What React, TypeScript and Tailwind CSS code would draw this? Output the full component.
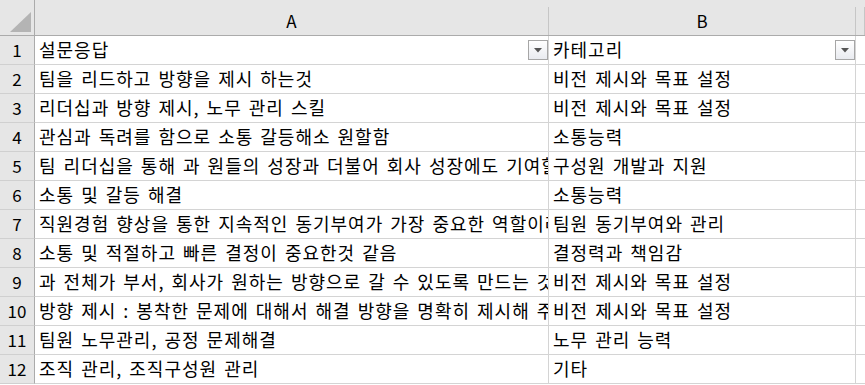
const rows: [string, string][] = [
  ['설문응답', '카테고리'],
  ['팀을 리드하고 방향을 제시 하는것', '비전 제시와 목표 설정'],
  ['리더십과 방향 제시, 노무 관리 스킬', '비전 제시와 목표 설정'],
  ['관심과 독려를 함으로 소통 갈등해소 원할함', '소통능력'],
  ['팀 리더십을 통해 과 원들의 성장과 더불어 회사 성장에도 기여할 수 있도록 하는 것', '구성원 개발과 지원'],
  ['소통 및 갈등 해결', '소통능력'],
  ['직원경험 향상을 통한 지속적인 동기부여가 가장 중요한 역할이라고 생각함', '팀원 동기부여와 관리'],
  ['소통 및 적절하고 빠른 결정이 중요한것 같음', '결정력과 책임감'],
  ['과 전체가 부서, 회사가 원하는 방향으로 갈 수 있도록 만드는 것', '비전 제시와 목표 설정'],
  ['방향 제시 : 봉착한 문제에 대해서 해결 방향을 명확히 제시해 주는 것', '비전 제시와 목표 설정'],
  ['팀원 노무관리, 공정 문제해결', '노무 관리 능력'],
  ['조직 관리, 조직구성원 관리', '기타'],
];

function FilterButton() {
  return (
    <div className="w-[20px] h-[20px] shrink-0 border border-[#a6a6a6] bg-gradient-to-b from-white to-[#e9ebf0] flex items-center justify-center">
      <svg width="8" height="5" viewBox="0 0 8 5">
        <polygon points="0,0 8,0 4,4.5" fill="#555" />
      </svg>
    </div>
  );
}

export default function App() {
  return (
    <div
      className="w-[865px] h-[385px] overflow-hidden bg-white text-black"
      style={{ fontFamily: '"Noto Sans CJK KR", "Noto Sans", sans-serif' }}
    >
      <div className="grid grid-cols-[35px_514px_307px_1fr]">
        {/* header */}
        <div className="h-[36px] bg-[#e6e6e6] border-r border-b border-[#ababab] flex items-end justify-end pr-[3px] pb-[3px]">
          <svg width="21" height="20" viewBox="0 0 21 20">
            <polygon points="21,0 21,20 0,20" fill="#b4b4b4" />
          </svg>
        </div>
        {['A', 'B', ''].map((h, i) => (
          <div key={i} className="h-[36px] bg-[#e6e6e6] border-b border-[#ababab] pt-[7px] flex">
            <div className="flex-1 border-r border-[#c6c6c6] flex items-center justify-center text-[17px] pb-[1px]">
              {h}
            </div>
          </div>
        ))}

        {rows.map(([a, b], i) => (
          <div key={i} className="contents">
            <div className="h-[29px] bg-[#e6e6e6] border-r border-[#ababab] border-b border-b-[#d0d0d0] flex items-center justify-center text-[17px] pb-[1px]">
              {i + 1}
            </div>
            <div className="h-[29px] border-r border-b border-[#d4d4d4] flex items-center pl-[4px] overflow-hidden">
              <span className="flex-1 whitespace-nowrap overflow-hidden text-[18px] tracking-[1px] [word-spacing:2px] leading-none pb-[3px]">{a}</span>
              {i === 0 && <FilterButton />}
            </div>
            <div className="h-[29px] border-r border-b border-[#d4d4d4] flex items-center pl-[4px] overflow-hidden">
              <span className="flex-1 whitespace-nowrap overflow-hidden text-[18px] tracking-[1px] [word-spacing:2px] leading-none pb-[3px]">{b}</span>
              {i === 0 && <FilterButton />}
            </div>
            <div className="h-[29px] border-b border-[#d4d4d4]" />
          </div>
        ))}
      </div>
    </div>
  );
}
